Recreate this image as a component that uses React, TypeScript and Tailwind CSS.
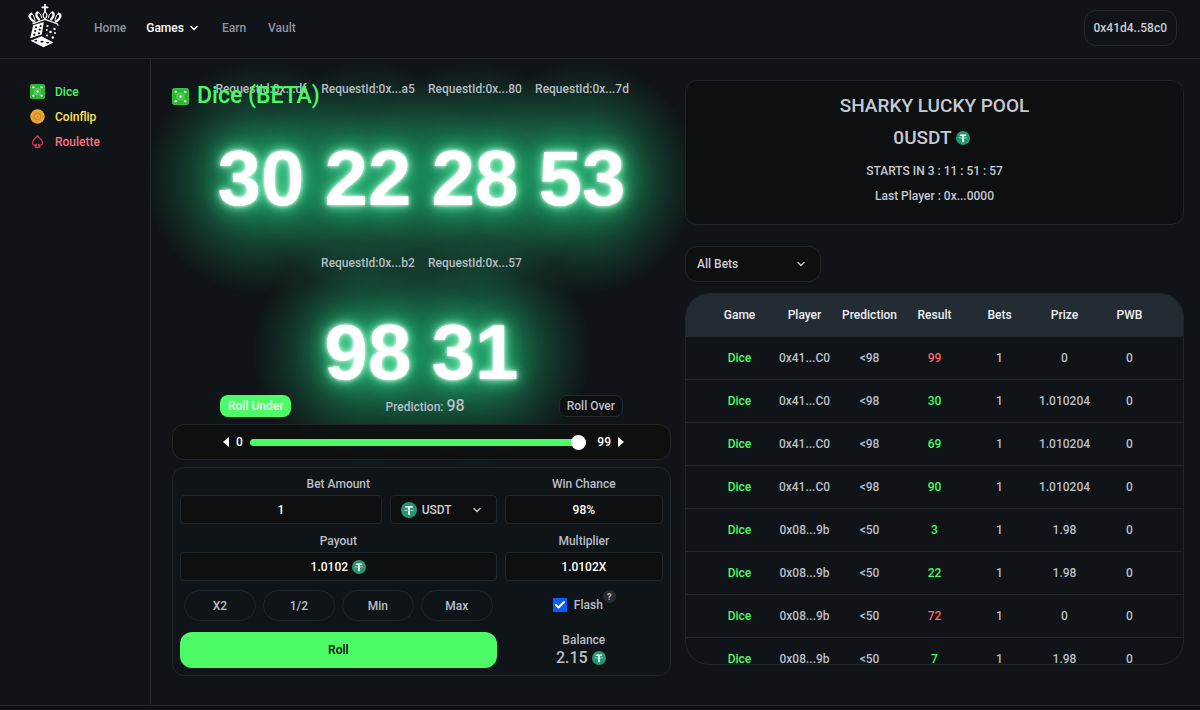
import { useState } from "react";
import { Check, ChevronDown } from "lucide-react";

const rolls = [
  { id: "df", value: "30" },
  { id: "a5", value: "22" },
  { id: "80", value: "28" },
  { id: "7d", value: "53" },
  { id: "b2", value: "98" },
  { id: "57", value: "31" },
];

const columns = ["Game", "Player", "Prediction", "Result", "Bets", "Prize", "PWB"];

const bets = [
  { player: "0x41...C0", prediction: "<98", result: 99, win: false, prize: "0" },
  { player: "0x41...C0", prediction: "<98", result: 30, win: true, prize: "1.010204" },
  { player: "0x41...C0", prediction: "<98", result: 69, win: true, prize: "1.010204" },
  { player: "0x41...C0", prediction: "<98", result: 90, win: true, prize: "1.010204" },
  { player: "0x08...9b", prediction: "<50", result: 3, win: true, prize: "1.98" },
  { player: "0x08...9b", prediction: "<50", result: 22, win: true, prize: "1.98" },
  { player: "0x08...9b", prediction: "<50", result: 72, win: false, prize: "0" },
  { player: "0x08...9b", prediction: "<50", result: 7, win: true, prize: "1.98" },
];

function Logo() {
  return (
    <svg viewBox="28 3 35 44" className="h-11 w-[35px]" aria-hidden="true">
      <g fill="none" stroke="#fff" strokeLinecap="round">
        <path d="M45 3.500v7M42.300 6.300h5.400" strokeWidth="1.700" />
        <path d="M45 11c-2.600 1.500-2.600 4.500 0 7c2.600-2.500 2.600-5.500 0-7z" strokeWidth="1.200" />
        <path d="M34 20.500c-5-3-5.500-6.500-2.700-7.800" strokeWidth="2.300" />
        <path d="M31.500 12.800c2 .2 2.500 3 3.500 6.500" strokeWidth="1" />
        <path d="M39 18.500c-2.800-3-3.500-5.500-1.500-7" strokeWidth="2.300" />
        <path d="M37.500 11.300c2.500 0 3.500 2.500 4.200 5.500" strokeWidth="1" />
        <path d="M56 20.500c5-3 5.500-6.500 2.700-7.800" strokeWidth="2.300" />
        <path d="M58.500 12.800c-2 .2-2.500 3-3.500 6.500" strokeWidth="1" />
        <path d="M51 18.500c2.800-3 3.500-5.500 1.500-7" strokeWidth="2.300" />
        <path d="M52.500 11.300c-2.500 0-3.500 2.500-4.200 5.500" strokeWidth="1" />
        <path d="M33 22.700l12-4.200l12 4.200l1 1.500" strokeWidth="1.300" />
      </g>
      <path d="M33.200 24.300L43.800 21L41.800 33.500L30.200 37.200z" fill="#fff" />
      <path d="M30.500 39.700L41.500 35.300L53.500 41.500L43.500 46.300z" fill="#fff" />
      <g fill="#101418">
        <circle cx="36" cy="26.300" r="1.100" />
        <circle cx="40.700" cy="25" r="1.100" />
        <circle cx="35.200" cy="30" r="1.100" />
        <circle cx="39.800" cy="28.700" r="1.100" />
        <circle cx="34.300" cy="33.700" r="1.100" />
        <circle cx="39" cy="32.300" r="1.100" />
        <ellipse cx="35.800" cy="39.600" rx="1.500" ry="0.900" />
        <ellipse cx="42" cy="40.700" rx="1.600" ry="0.900" />
        <ellipse cx="47.700" cy="41.600" rx="1.500" ry="0.900" />
      </g>
      <g fill="#fff">
        <circle cx="47.500" cy="25" r="1.100" />
        <circle cx="54.500" cy="28" r="1.200" />
        <circle cx="50.500" cy="31" r="1.300" />
        <circle cx="46.800" cy="29" r="1" />
        <circle cx="55" cy="32" r="1" />
        <circle cx="47" cy="34.500" r="0.900" />
        <circle cx="52.800" cy="36.500" r="1.200" />
      </g>
    </svg>
  );
}

function DiceIcon({ className }: { className: string }) {
  return (
    <svg viewBox="0 0 17 17" className={className} aria-hidden="true">
      <rect x="0.500" y="0.500" width="16" height="16" rx="1.800" fill="#22b92c" stroke="#35c93e" />
      <circle cx="8.500" cy="8.500" r="4.500" fill="#6be070" opacity="0.500" />
      <g fill="#f2fff2" stroke="#2f8a35" strokeWidth="0.500">
        <circle cx="3.800" cy="3.800" r="1.600" />
        <circle cx="13.200" cy="3.800" r="1.600" />
        <circle cx="8.500" cy="8.500" r="1.600" />
        <circle cx="3.800" cy="13.200" r="1.600" />
        <circle cx="13.200" cy="13.200" r="1.600" />
      </g>
    </svg>
  );
}

function CoinIcon() {
  return (
    <svg viewBox="0 0 16 16" className="size-[15px]" aria-hidden="true">
      <circle cx="8" cy="8" r="7.700" fill="#f0ab35" />
      <circle cx="8" cy="8" r="6" fill="#e8a02c" />
      <circle cx="8" cy="8" r="3.400" fill="#f0ab42" stroke="#c27a1c" strokeWidth="0.900" />
      <circle cx="8" cy="8" r="1.500" fill="#e6942a" />
    </svg>
  );
}

function SpadeIcon() {
  return (
    <svg viewBox="0 0 24 24" className="size-[15px]" fill="none" stroke="#e0364f" strokeWidth="2" strokeLinejoin="round" aria-hidden="true">
      <path d="M12 3C10 6 4 9 4 14C4 18.500 8.500 18.500 10.500 16.500L10 19H8.500V21.500H15.500V19H14L13.500 16.500C15.500 18.500 20 18.500 20 14C20 9 14 6 12 3Z" />
    </svg>
  );
}

function Tether({ className }: { className: string }) {
  return (
    <svg viewBox="0 0 32 32" className={className} aria-hidden="true">
      <circle cx="16" cy="16" r="16" fill="#259770" />
      <path
        fill="#fff"
        d="M17.922 17.383v-.002c-.11.008-.677.042-1.942.042-1.010 0-1.721-.03-1.971-.042v.003c-3.888-.171-6.790-.848-6.790-1.658 0-.809 2.902-1.486 6.790-1.660v2.644c.254.018.982.061 1.988.061 1.207 0 1.812-.05 1.925-.06v-2.643c3.880.173 6.775.85 6.775 1.658 0 .81-2.895 1.485-6.775 1.657m0-3.590v-2.366h5.414V7.819H8.595v3.608h5.414v2.365c-4.400.202-7.709 1.074-7.709 2.118 0 1.044 3.309 1.915 7.709 2.118v7.582h3.913v-7.584c4.393-.202 7.694-1.073 7.694-2.116 0-1.043-3.301-1.914-7.694-2.117"
      />
    </svg>
  );
}

function Header() {
  return (
    <header className="flex h-[59px] items-center border-b border-[#24292d] pr-[23px] pb-[3px] pl-7">
      <a href="#home" aria-label="Home page" className="mb-1">
        <Logo />
      </a>
      <nav className="ml-[31px] flex items-center text-[#8e939d]">
        <a href="#home">Home</a>
        <button type="button" className="ml-5 flex items-center gap-1 text-white">
          Games
          <ChevronDown className="size-3" strokeWidth={3} />
        </button>
        <a href="#earn" className="ml-[22px]">Earn</a>
        <a href="#vault" className="ml-[22px]">Vault</a>
      </nav>
      <button type="button" className="ml-auto h-9 rounded-xl border border-[#24292d] px-[9px] text-[#c9ced6]">
        0x41d4..58c0
      </button>
    </header>
  );
}

function Sidebar() {
  return (
    <aside className="w-[151px] shrink-0 border-r border-[#24292d] pt-5 pl-[30px]">
      <ul>
        <li>
          <a href="#dice" className="flex h-[25px] items-center gap-[10px] text-[#4afa62]">
            <DiceIcon className="size-[15px]" />
            Dice
          </a>
        </li>
        <li>
          <a href="#coinflip" className="flex h-[25px] items-center gap-[10px] text-[#fde559]">
            <CoinIcon />
            Coinflip
          </a>
        </li>
        <li>
          <a href="#roulette" className="flex h-[25px] items-center gap-[10px] text-[#f8747a]">
            <SpadeIcon />
            Roulette
          </a>
        </li>
      </ul>
    </aside>
  );
}

function Stage() {
  return (
    <div className="relative isolate">
      <ul className="mx-auto flex max-w-[428px] flex-wrap justify-center gap-y-[34px] text-center">
        {rolls.map((roll) => (
          <li
            key={roll.id}
            className="relative w-[107px] before:absolute before:-inset-x-[62px] before:-top-[18px] before:-bottom-[74px] before:-z-10 before:bg-[radial-gradient(closest-side,#1ea869b0,#1ea86984_35%,#1ea86944_62%,#1ea8691c_82%,#1ea86900)]"
          >
            <p className="relative z-10 leading-[18px] text-[#b4bec4]">RequestId:0x...{roll.id}</p>
            <p className="mt-[38px] font-['Liberation_Sans',Arial,sans-serif] text-[78px] leading-[84px] font-bold text-white [text-shadow:0_0_3px_#ffffff,0_0_9px_#b4ffd9,0_0_18px_#3fdc96,0_0_36px_#25c47e]">
              {roll.value}
            </p>
          </li>
        ))}
      </ul>
      <h1 className="absolute top-0 left-0 z-20 flex items-center gap-2 text-[23px] leading-8 text-[#4afa62]">
        <DiceIcon className="size-[17px]" />
        Dice (BETA)
      </h1>
    </div>
  );
}

function Readout({ label, children }: { label: string; children: React.ReactNode }) {
  return (
    <div className="text-center">
      <p className="h-5 leading-[18px]">{label}</p>
      <output className="flex h-[29px] items-center justify-center gap-1 rounded border border-[#212629] bg-[#0e0f10] text-white">
        {children}
      </output>
    </div>
  );
}

function BetForm() {
  const [prediction, setPrediction] = useState(98);
  const [amount, setAmount] = useState("1");
  const [flash, setFlash] = useState(true);

  return (
    <form onSubmit={(event) => event.preventDefault()} className="relative mt-px">
      <div className="flex h-[22px] items-center justify-between px-12">
        <button type="button" className="h-[22px] rounded-lg bg-[#4dfb67] px-2 text-[#eafff0]">Roll Under</button>
        <p>
          Prediction: <span className="text-base leading-5">{prediction}</span>
        </p>
        <button type="button" className="h-[22px] rounded-lg border border-[#24292d] bg-[#0e0f10] px-[7px]">Roll Over</button>
      </div>

      <div className="mt-[7px] flex h-9 items-center justify-center gap-[7px] rounded-xl border border-[#212629] bg-[#0e0f10]/90 pr-[46px] pl-[50px] text-white">
        <button type="button" aria-label="Decrease" className="flex h-[10px] w-[6px] items-center" onClick={() => setPrediction(Math.max(0, prediction - 1))}>
          <svg viewBox="0 0 6 10" className="h-[10px] w-[6px]" aria-hidden="true"><path d="M6 0v10L0 5z" fill="#fff" /></svg>
        </button>
        <span>0</span>
        <input
          type="range"
          min={0}
          max={98}
          value={prediction}
          onChange={(event) => setPrediction(Number(event.target.value))}
          aria-label="Prediction"
          className="h-4 min-w-0 flex-1 appearance-none bg-transparent [&::-webkit-slider-runnable-track]:h-[7px] [&::-webkit-slider-runnable-track]:rounded-full [&::-webkit-slider-runnable-track]:bg-[#4dfb67] [&::-webkit-slider-thumb]:-mt-1 [&::-webkit-slider-thumb]:size-[15px] [&::-webkit-slider-thumb]:appearance-none [&::-webkit-slider-thumb]:rounded-full [&::-webkit-slider-thumb]:bg-white"
        />
        <span className="ml-1">99</span>
        <button type="button" aria-label="Increase" className="flex h-[10px] w-[6px] items-center" onClick={() => setPrediction(Math.min(98, prediction + 1))}>
          <svg viewBox="0 0 6 10" className="h-[10px] w-[6px]" aria-hidden="true"><path d="M0 0v10l6-5z" fill="#fff" /></svg>
        </button>
      </div>

      <div className="mt-[7px] grid grid-cols-[2fr_1fr] gap-x-2 gap-y-2 rounded-xl border border-[#212629] bg-[#101418]/90 p-[7px]">
        <div className="grid grid-cols-[1fr_107px] items-end gap-x-2 text-center">
          <label htmlFor="amount" className="col-span-2 h-5 leading-[18px]">Bet Amount</label>
          <input
            id="amount"
            value={amount}
            onChange={(event) => setAmount(event.target.value)}
            className="h-[29px] min-w-0 rounded border border-[#212629] bg-[#0e0f10] text-center text-white"
          />
          <div className="relative flex h-[29px] items-center">
            <Tether className="pointer-events-none absolute left-[11px] size-4" />
            <select aria-label="Token" className="h-[29px] w-full appearance-none rounded border border-[#212629] bg-[#0e0f10] pl-[31px] text-[#c9ced6]">
              <option>USDT</option>
            </select>
            <ChevronDown className="pointer-events-none absolute right-[14px] size-3" strokeWidth={3} />
          </div>
        </div>
        <Readout label="Win Chance">{prediction}%</Readout>

        <Readout label="Payout">
          1.0102 <Tether className="size-[14px]" />
        </Readout>
        <Readout label="Multiplier">1.0102X</Readout>

        <div className="grid h-8 grid-cols-4 gap-[7px] px-1 pt-px">
          {["X2", "1/2", "Min", "Max"].map((name) => (
            <button key={name} type="button" className="h-[31px] rounded-full border border-[#212629]">{name}</button>
          ))}
        </div>
        <div className="flex items-center justify-center pr-3">
          <label className="relative flex items-center gap-[7px]">
            <input
              type="checkbox"
              checked={flash}
              onChange={(event) => setFlash(event.target.checked)}
              className="peer size-[14px] appearance-none bg-[#0f1012] checked:bg-[#0b5cff]"
            />
            <Check className="absolute left-px hidden size-3 text-white peer-checked:block" strokeWidth={4} />
            Flash
            <span className="absolute -top-[7px] -right-[13px] flex size-[13px] items-center justify-center rounded-full bg-[#262c31] text-[9px] font-bold">?</span>
          </label>
        </div>

        <button type="submit" className="mt-[3px] h-9 rounded-xl bg-[#4dfb67] text-black">Roll</button>
        <div className="mt-[3px] text-center">
          <p className="leading-4">Balance</p>
          <p className="flex items-center justify-center gap-1 pr-[6px] text-base leading-5">
            2.15 <Tether className="size-[14px]" />
          </p>
        </div>
      </div>
    </form>
  );
}

function Pool() {
  return (
    <section className="h-[145px] rounded-xl border border-[#212629] bg-[#0e0f10] pt-[13px] text-center text-[#c5cad2]">
      <h2 className="text-[19px] leading-6">SHARKY LUCKY POOL</h2>
      <p className="mt-2 flex items-center justify-center gap-1 pr-[6px] text-[19px] leading-6">
        0USDT <Tether className="size-[14px]" />
      </p>
      <p className="mt-3 leading-[18px]">STARTS IN 3 : 11 : 51 : 57</p>
      <p className="mt-[7px] leading-[18px]">Last Player : 0x...0000</p>
    </section>
  );
}

function BetsTable() {
  return (
    <div className="mt-[11px] h-[372px] overflow-hidden rounded-3xl border border-[#212629]">
      <table className="w-full table-fixed text-center">
        <thead className="bg-[#242c33] text-[#eceff3]">
          <tr className="h-[42px]">
            {columns.map((name) => (
              <th key={name} scope="col" className="p-0 font-medium first:w-[86px] first:pl-[21px] last:w-[86px] last:pr-[21px]">
                {name}
              </th>
            ))}
          </tr>
        </thead>
        <tbody>
          {bets.map((bet) => (
            <tr key={bet.result} className="h-[43px] border-t border-[#212629]">
              <td className="pl-[21px] text-[#4afa62]">Dice</td>
              <td>{bet.player}</td>
              <td>{bet.prediction}</td>
              <td className={bet.win ? "text-[#4afa62]" : "text-[#f8656c]"}>{bet.result}</td>
              <td>1</td>
              <td>{bet.prize}</td>
              <td className="pr-[21px]">0</td>
            </tr>
          ))}
        </tbody>
      </table>
    </div>
  );
}

export default function App() {
  return (
    <div className="flex min-h-screen flex-col bg-[#101418] font-[Roboto,'Liberation_Sans',Arial,sans-serif] text-xs font-medium text-[#b9bec7]">
      <Header />
      <div className="flex flex-1">
        <Sidebar />
        <main className="grid min-w-0 flex-1 grid-cols-2 gap-x-[14px] pt-[21px] pr-4 pl-[21px]">
          <div className="min-w-0">
            <Stage />
            <BetForm />
          </div>
          <div className="relative min-w-0">
            <Pool />
            <div className="relative mt-[21px] w-[136px]">
              <select aria-label="Bets filter" className="h-9 w-full appearance-none rounded-xl border border-[#212629] bg-[#0e0f10] pl-[11px] text-[#c9ced6]">
                <option>All Bets</option>
              </select>
              <ChevronDown className="pointer-events-none absolute top-3 right-[14px] size-3" strokeWidth={3} />
            </div>
            <BetsTable />
          </div>
        </main>
      </div>
      <footer className="h-[5px] border-t border-[#24292d] bg-[#0f1013]" />
    </div>
  );
}
